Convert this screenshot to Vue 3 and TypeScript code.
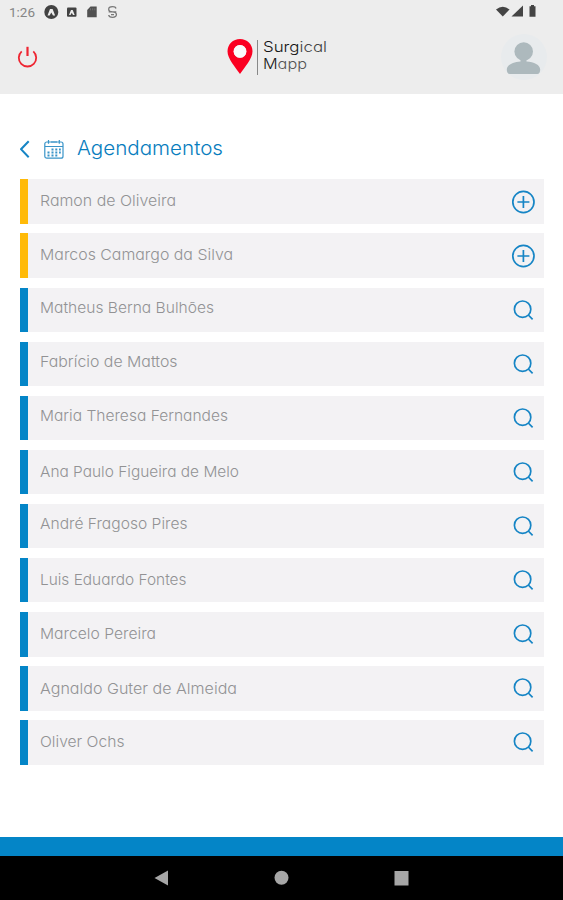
<script setup lang="ts">
interface Appointment {
  name: string
  width: number
  baseline: number
  pending?: boolean
}

const appointments: Appointment[] = [
  { name: 'Ramon de Oliveira', width: 136, baseline: 27, pending: true },
  { name: 'Marcos Camargo da Silva', width: 193, baseline: 27, pending: true },
  { name: 'Matheus Berna Bulhões', width: 174, baseline: 24.7 },
  { name: 'Fabrício de Mattos', width: 137.5, baseline: 25.2 },
  { name: 'Maria Theresa Fernandes', width: 188, baseline: 25 },
  { name: 'Ana Paulo Figueira de Melo', width: 199, baseline: 27 },
  { name: 'André Fragoso Pires', width: 147.5, baseline: 25 },
  { name: 'Luis Eduardo Fontes', width: 146.5, baseline: 26.5 },
  { name: 'Marcelo Pereira', width: 116, baseline: 26.6 },
  { name: 'Agnaldo Guter de Almeida', width: 197, baseline: 27.5 },
  { name: 'Oliver Ochs', width: 84.5, baseline: 27.4 },
]
</script>

<template>
  <div class="screen">
    <header class="header">
      <div class="status">
        <svg class="clock" width="34" height="20" aria-label="1:26">
          <text x="0" y="12.700" textLength="26" lengthAdjust="spacingAndGlyphs">1:26</text>
        </svg>
        <svg class="notices" width="76" height="20" viewBox="0 0 76 20">
          <circle cx="7.300" cy="8" r="7" fill="#424242" />
          <path d="M3.500 11.500 6 5h2.600l2.500 6.500H9L7.300 8.500l-1.700 3z" fill="#ededed" />
          <rect x="23" y="3.400" width="9.500" height="9.400" rx="1" fill="#424242" />
          <path d="M25 11l2-5h1.700l2 5H29l-1.200-2.300L26.500 11z" fill="#ededed" />
          <path d="M46.500 2.600h6.200v10.700h-9.500V6z" fill="#515151" />
          <path d="M46.500 4.300v2M48.700 4.300v2M50.800 4.300v2" stroke="#777" stroke-width=".8" />
          <path d="M72 4.500Q71.500 2.700 68.500 2.700 64.700 2.700 64.700 5.200 64.700 7.700 68.500 7.800 72.400 8 72.400 10.600 72.400 13.300 68.500 13.300 65 13.300 64.700 11M64.700 7.900h7.600M67 10.600h3" fill="none" stroke="#777" stroke-width="1.300" />
        </svg>
        <svg class="signals" width="44" height="20" viewBox="0 0 44 20">
          <path d="M0 5.500Q6.800-.2 13.500 5.500L6.800 12.500z" fill="#444" />
          <path d="M27 1.500v11H15.500z" fill="#444" />
          <path d="M33.500 2.300H35V1h3v1.300h1.500v10.500h-6z" fill="#444" />
        </svg>
      </div>
      <div class="toolbar">
        <svg class="power" width="24" height="24" viewBox="0 0 24 24">
          <path d="M6.700 6.300A8.700 8.700 0 1 0 18.300 6.300" />
          <path d="M12.500 1.800v9.200" stroke-width="2.200" />
        </svg>
        <div class="brand">
          <svg width="26" height="38" viewBox="0 0 26 38">
            <path fill="#fb0021" fill-rule="evenodd" d="M13 1C6 1 .5 6.300.5 13.200.5 21 8.500 29 13 36c4.500-7 12.500-15 12.500-22.800C25.500 6.300 20 1 13 1zm0 6a6.400 6.400 0 1 1 0 12.800A6.400 6.400 0 0 1 13 7z" />
            <circle cx="13" cy="13.400" r="6.300" fill="#fafafa" />
          </svg>
          <i class="divider"></i>
          <svg class="wordmark" width="68" height="44">
            <text x="0" y="17" textLength="64" lengthAdjust="spacingAndGlyphs">Surg<tspan fill="#444">ical</tspan></text>
            <text x="0" y="34.300" textLength="44" lengthAdjust="spacingAndGlyphs">M<tspan fill="#555">app</tspan></text>
          </svg>
        </div>
        <svg class="avatar" width="48" height="48" viewBox="0 0 48 48">
          <circle cx="24" cy="24" r="23" fill="#e8ebed" />
          <circle cx="23.700" cy="18.500" r="9.300" fill="#adb9bd" />
          <path d="M20.500 26h6v2.500c7.500.5 13.700 3.500 13.700 8 0 2.500-1 4.500-3 4.500H9.800c-2 0-3-2-3-4.500 0-4.500 6.200-7.500 13.700-8z" fill="#adb9bd" />
        </svg>
      </div>
    </header>

    <main class="content">
      <div class="title">
        <svg class="back" width="12" height="20" viewBox="0 0 12 20">
          <path d="M8.700 2.200 1 10.200l7.700 8" />
        </svg>
        <svg class="calendar" width="20" height="20" viewBox="0 0 20 20">
          <rect x=".8" y="3" width="18.200" height="16.200" rx="2" />
          <path d="M1 7.500h18M4.500 1v3.700M15.300 1v3.700M7 3h6" />
          <path d="M7.500 10.500h2M11.300 10.500h2M15 10.500h1.800M3.500 13.500h2M7.500 13.500h2M11.300 13.500h2M15 13.500h1.800M3.500 16.500h2M7.500 16.500h2M11.300 16.500h2" stroke-width="1.800" />
        </svg>
        <svg class="heading" width="160" height="32">
          <text x="0" y="21.500" textLength="146" lengthAdjust="spacingAndGlyphs">Agendamentos</text>
        </svg>
      </div>

      <ul class="list">
        <li v-for="item in appointments" :key="item.name" class="row" :class="{ pending: item.pending }">
          <svg class="name" width="220" height="44">
            <text x="0" :y="item.baseline" :textLength="item.width" lengthAdjust="spacingAndGlyphs">{{ item.name }}</text>
          </svg>
          <svg class="action" width="26" height="26" viewBox="0 0 26 26">
            <template v-if="item.pending">
              <circle cx="13.400" cy="13" r="10.600" />
              <path d="M13.400 7v12M7.400 13h12" />
            </template>
            <template v-else>
              <circle cx="12.600" cy="12.200" r="8.200" />
              <path d="m18.300 18 4.300 4.300" />
            </template>
          </svg>
        </li>
      </ul>
    </main>

    <div class="accent"></div>
    <nav class="navigation">
      <svg width="16" height="18" viewBox="0 0 16 18"><path d="M.5 9 14 1.500v15z" /></svg>
      <svg width="16" height="18" viewBox="0 0 16 18"><circle cx="7.500" cy="8.800" r="7" /></svg>
      <svg width="16" height="18" viewBox="0 0 16 18"><path d="M.5 2h14v14.500H.5z" /></svg>
    </nav>
  </div>
</template>

<style>
body {
  margin: 0;
}
</style>

<style scoped>
.screen {
  display: flex;
  flex-direction: column;
  width: 563px;
  height: 900px;
  overflow: hidden;
  background: #fff;
  font-family: Inter, "Liberation Sans", sans-serif;
  font-feature-settings: "cv11" 1;
}
svg {
  display: block;
  flex: none;
}
.header {
  box-sizing: border-box;
  height: 94px;
  padding-top: 4px;
  background: #ededed;
}
.status {
  display: flex;
  height: 20px;
  padding: 0 19px 0 8.500px;
}
.clock {
  font-family: Roboto, sans-serif;
  font-size: 13.500px;
  fill: #858585;
}
.notices {
  margin-left: 1px;
}
.signals {
  margin-left: auto;
  margin-right: 4px;
}
.toolbar {
  display: grid;
  grid-template-columns: 1fr auto 1fr;
  height: 66px;
  padding: 0 15px;
  align-items: center;
}
.power {
  fill: none;
  stroke: #ee2632;
  stroke-width: 1.800;
}
.brand {
  display: flex;
  align-items: center;
  height: 40px;
  margin-left: -5px;
}
.divider {
  width: 1px;
  height: 35px;
  margin: 0 5px 0 4px;
  background: #888;
}
.wordmark {
  font-size: 14.300px;
  font-weight: 300;
  fill: #151515;
}
.avatar {
  justify-self: end;
}
.content {
  flex: 1;
  padding: 38px 19px 0 20px;
}
.title {
  display: flex;
  align-items: center;
  height: 34px;
}
.back,
.calendar,
.action {
  fill: none;
  stroke: #1685c5;
}
.back {
  stroke-width: 2;
}
.calendar {
  margin-left: 12px;
  stroke: #3994c8;
  stroke-width: 1.200;
}
.heading {
  margin-left: 13px;
  font-size: 19.500px;
  font-weight: 300;
  fill: #087dbe;
}
.list {
  display: grid;
  grid-auto-rows: 44.500px;
  row-gap: 9.580px;
  margin: 13.400px 0 0;
  padding: 0;
  list-style: none;
}
.row {
  display: flex;
  box-sizing: border-box;
  justify-content: space-between;
  align-items: flex-start;
  padding: 0 8px 0 12px;
  border-left: 8px solid #0485c7;
  background: #f3f2f4;
}
.row.pending {
  border-left-color: #ffba08;
}
.name {
  font-size: 15px;
  font-weight: 300;
  fill: #929294;
}
.action {
  margin-top: 9.300px;
  stroke-width: 1.700;
}
.accent {
  height: 19px;
  background: #0485c7;
}
.navigation {
  display: flex;
  justify-content: center;
  align-items: center;
  gap: 104px;
  height: 44px;
  background: #000;
  fill: #a6a6a6;
}
</style>
